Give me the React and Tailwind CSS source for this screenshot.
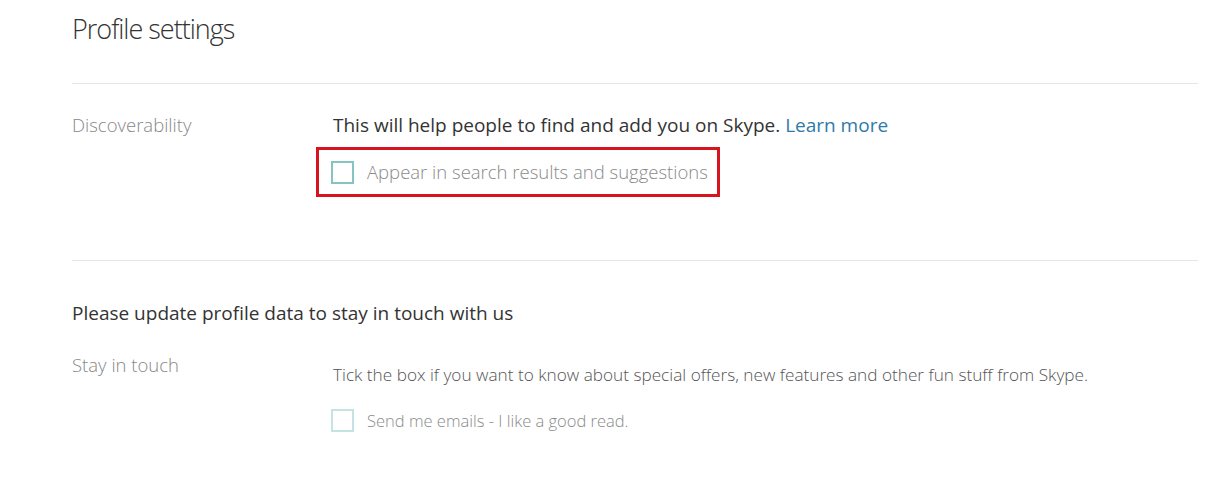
import React from 'react';

function Checkbox({ light }) {
    return (
        <span
            className={`inline-block w-[23px] h-[23px] shrink-0 border-2 ${light ? 'border-[#c4e3e3]' : 'border-[#86c3c3]'}`}
        />
    );
}

export default function App() {
    return (
        <div className="w-[1232px] h-[481px] bg-white pl-[72px] pr-[34px] [font-family:'Open_Sans','Noto_Sans',sans-serif]">
            {/* Header */}
            <h1 className="pt-[12px] h-[83px] text-[27px] font-light text-[#333] tracking-[-1px] leading-[34px]">
                Profile settings
            </h1>
            <div className="h-px bg-[#e6e6e6]" />

            {/* Discoverability */}
            <div className="flex h-[176px] pt-[28px]">
                <div className="w-[244px] text-[18.5px] font-light text-[#888] leading-[26px]">
                    Discoverability
                </div>
                <div className="flex flex-col">
                    <p className="ml-[17px] text-[19px] text-[#333] leading-[26px]">
                        This will help people to find and add you on Skype.{' '}
                        <a className="text-[#2f7aa8]" href="#">Learn more</a>
                    </p>
                    <div className="mt-[9px] self-start flex items-center gap-[13px] border-[3px] border-[#d7141d] h-[50px] pl-[12px] pr-[9px]">
                        <Checkbox />
                        <span className="text-[18.5px] font-light text-[#8a8a8a] leading-[24px]">
                            Appear in search results and suggestions
                        </span>
                    </div>
                </div>
            </div>
            <div className="h-px bg-[#e6e6e6]" />

            {/* Stay in touch */}
            <h2 className="pt-[39px] text-[19px] text-[#333] leading-[26px]">
                Please update profile data to stay in touch with us
            </h2>
            <div className="flex pt-[26px]">
                <div className="w-[261px] text-[18.5px] font-light text-[#888] leading-[26px]">
                    Stay in touch
                </div>
                <div className="flex flex-col pt-[11px]">
                    <p className="text-[17.2px] font-light text-[#555] leading-[24px]">
                        Tick the box if you want to know about special offers, new features and other fun stuff from Skype.
                    </p>
                    <div className="mt-[21px] -ml-[2px] flex items-center gap-[13px]">
                        <Checkbox light />
                        <span className="text-[16.5px] font-light text-[#8a8a8a] leading-[24px] translate-y-[1px]">
                            Send me emails - I like a good read.
                        </span>
                    </div>
                </div>
            </div>
        </div>
    );
}
